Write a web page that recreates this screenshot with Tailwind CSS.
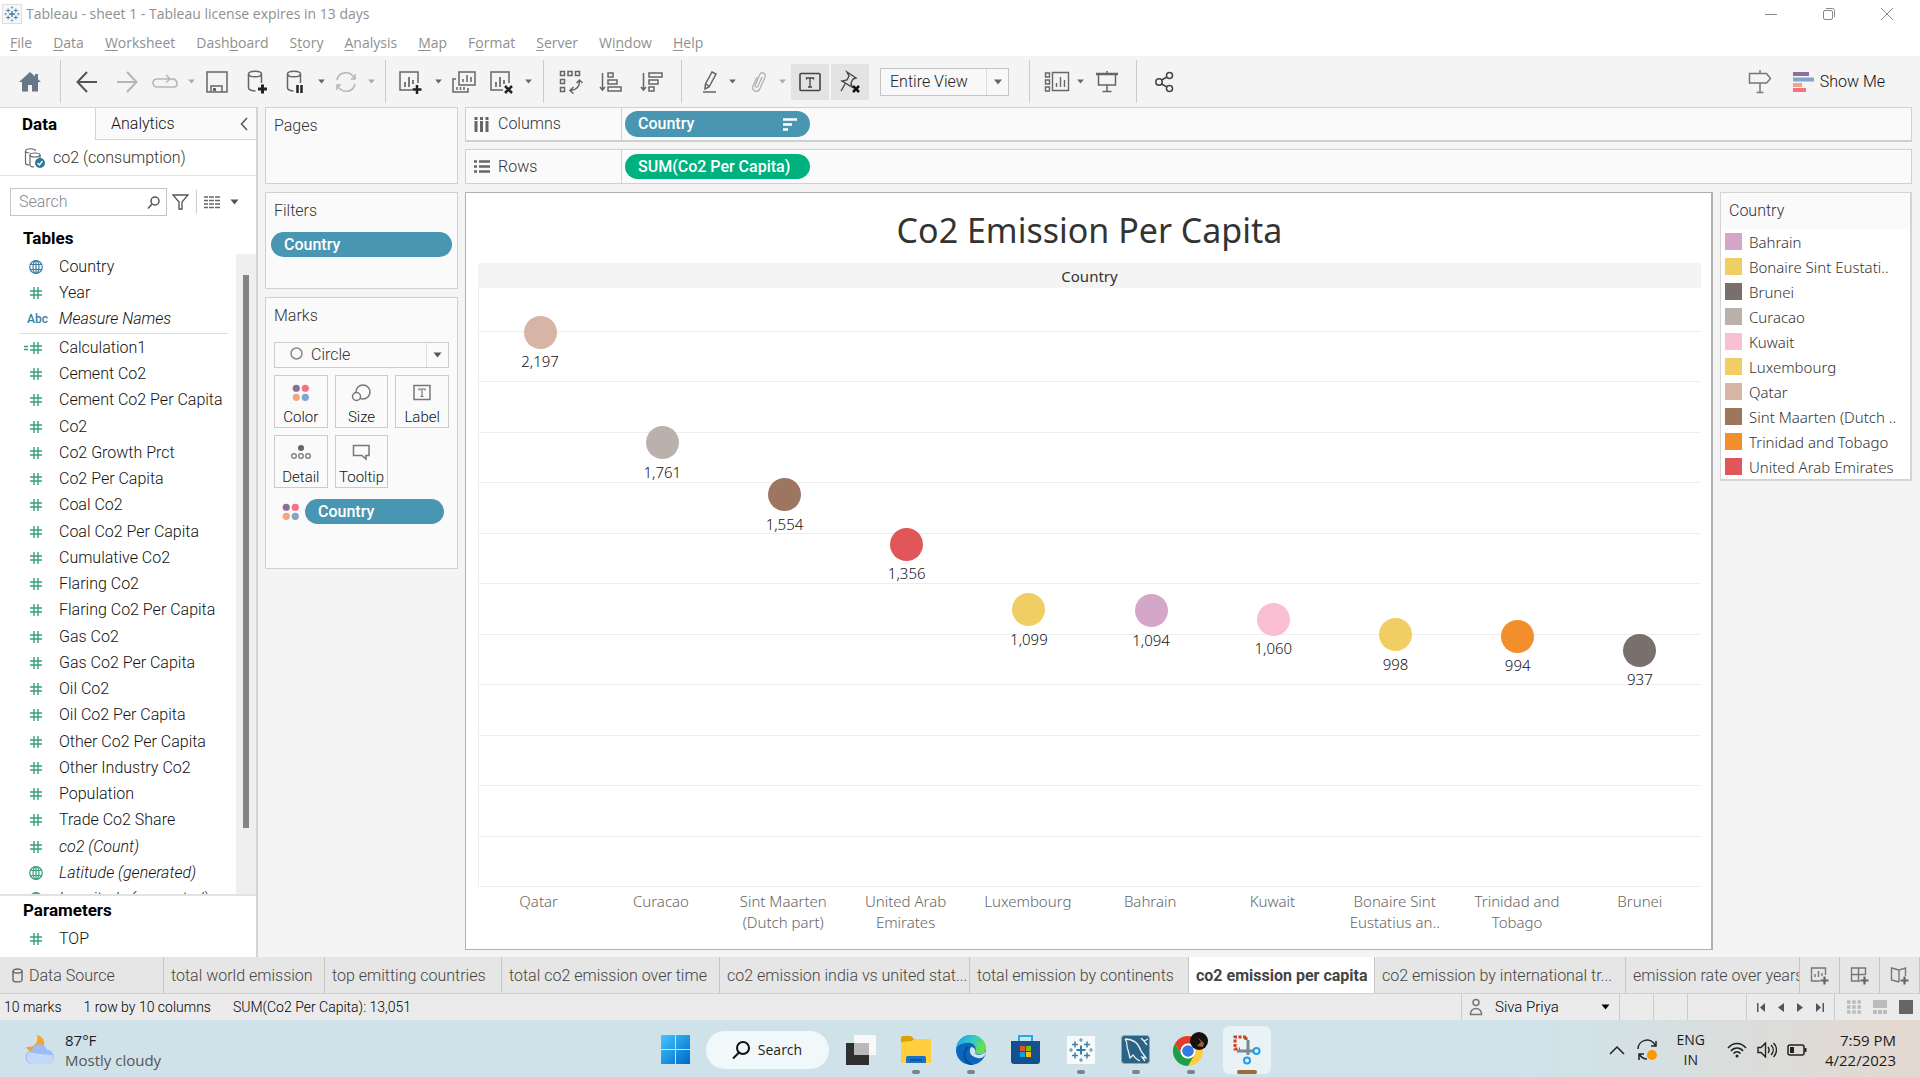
<!DOCTYPE html>
<html lang="en">
<head>
<meta charset="utf-8">
<title>Tableau - sheet 1</title>
<script src="https://cdn.jsdelivr.net/npm/@tailwindcss/browser@4"></script>
</head>
<body class="h-screen overflow-hidden bg-[#f4f4f4] font-['Roboto',sans-serif] text-[16px] leading-5 font-light text-[#222]">
<svg class="hidden" aria-hidden="true">
  <symbol id="hash" viewBox="0 0 14 14"><path d="M5 1v12M9 1v12M1 5h12M1 9h12" stroke="currentColor" stroke-width="1.4" fill="none"/></symbol>
  <symbol id="calc" viewBox="0 0 20 14"><path d="M11 1v12M15 1v12M7 5h12M7 9h12M1 5.500h4M1 8.500h4" stroke="currentColor" stroke-width="1.400" fill="none"/></symbol>
  <symbol id="globe" viewBox="0 0 14 14"><g stroke="currentColor" stroke-width="1.200" fill="none"><circle cx="7" cy="7" r="6.300"/><ellipse cx="7" cy="7" rx="3" ry="6.300"/><path d="M7 .7v12.600M1.500 4.500h11M1.500 9.500h11"/></g></symbol>
  <symbol id="caret" viewBox="0 0 8 6"><path d="M0 .5h8L4 5.500z" fill="currentColor"/></symbol>
  <symbol id="dots" viewBox="0 0 16 16"><circle cx="4" cy="4" r="3.400" fill="#8b7099"/><circle cx="12.500" cy="4" r="3.400" fill="#f8707f"/><circle cx="4" cy="12.500" r="3.400" fill="#f4a57c"/><circle cx="12.500" cy="12.500" r="3.400" fill="#84a4cb"/></symbol>
  <symbol id="tableau" viewBox="0 0 28 28"><path d="M14 9.500v9M9.500 14h9" stroke="#3a76a0" stroke-width="2"/><path d="M8 5.500v6M5 8.500h6M20 5.500v6M17 8.500h6M8 16.500v6M5 19.500h6M20 16.500v6M17 19.500h6" stroke="#3f7fa8" stroke-width="1.500"/><path d="M14 2v4M12 4h4M14 22v4M12 24h4M4 12v4M2 14h4M24 12v4M22 14h4" stroke="#5b93b5" stroke-width="1.200"/></symbol>
  <symbol id="sheet" viewBox="0 0 26 26"><g fill="none" stroke="#666" stroke-width="1.500"><path d="M15 21H3V3h18v11"/><path d="M8 18v-5M12 18V8M16 15v-4" stroke-width="1.700"/></g></symbol>
</svg>
<div class="flex h-screen flex-col">

  <!-- Title bar -->
  <header class="bg-white font-['Open_Sans',sans-serif] text-[14px] font-normal text-[#8f8f8f]">
    <div class="flex h-7 items-center">
      <svg class="ml-[2px] size-5 border border-[#ddd] bg-[#f4f6f8]"><use href="#tableau"/></svg>
      <span class="ml-1">Tableau - sheet 1 - Tableau license expires in 13 days</span>
      <div class="mr-1 ml-auto flex">
        <button aria-label="Minimize" class="flex w-[58px] justify-center"><svg width="12" height="14"><path d="M0 7.500h12" stroke="#888"/></svg></button>
        <button aria-label="Restore" class="flex w-[58px] justify-center"><svg width="14" height="14" fill="none" stroke="#888"><rect x="1.500" y="3.500" width="9" height="9" rx="1.500"/><path d="M4 1.500h6.500a2 2 0 0 1 2 2V10"/></svg></button>
        <button aria-label="Close" class="flex w-[58px] justify-center"><svg width="14" height="14" stroke="#888"><path d="M1 1l12 12M13 1L1 13"/></svg></button>
      </div>
    </div>
    <nav class="flex h-7 items-center gap-[21px] pt-[2px] pl-[10px] [&_u]:underline-offset-2">
      <a href="#"><u>F</u>ile</a><a href="#"><u>D</u>ata</a><a href="#"><u>W</u>orksheet</a><a href="#">Dash<u>b</u>oard</a><a href="#">S<u>t</u>ory</a><a href="#"><u>A</u>nalysis</a><a href="#"><u>M</u>ap</a><a href="#">F<u>o</u>rmat</a><a href="#"><u>S</u>erver</a><a href="#">Wi<u>n</u>dow</a><a href="#"><u>H</u>elp</a>
    </nav>
  </header>

  <!-- Toolbar -->
  <div role="toolbar" class="flex h-[51px] shrink-0 items-center text-[#666] [&>button]:flex [&>button]:h-9 [&>button]:shrink-0 [&>button]:items-center [&>button]:justify-center [&>hr]:h-[43px] [&>hr]:w-px [&>hr]:border-0 [&>hr]:bg-[#ccc]">
    <button aria-label="Home" class="w-[60px]"><svg width="24" height="22"><path d="M12 1L1 11h3v9.500h6V14h4v6.500h6V11h3l-3-2.800V3h-3v2.500z" fill="#697688"/></svg></button><hr>
    <button aria-label="Undo" class="ml-[6px] w-10"><svg width="22" height="22" fill="none" stroke="#555" stroke-width="2"><path d="M21 11H2M11 1L1.500 11L11 21"/></svg></button>
    <button aria-label="Redo" class="w-10"><svg width="22" height="22" fill="none" stroke="#b5b5b5" stroke-width="2"><path d="M1 11h19M11 1l9.500 10L11 21"/></svg></button>
    <button aria-label="Replay" class="w-9"><svg width="26" height="16" fill="none" stroke="#b5b5b5" stroke-width="1.500"><path d="M17 5H4.500a4 4 0 0 0-3.500 4c0 2.500 2 4 4 4H22c4 0 4-6 0-8h-5M14 1l4 4l-4 3.500"/></svg></button>
    <button aria-label="Replay options" class="w-4 text-[#aaa]"><svg width="7" height="5"><use href="#caret"/></svg></button>
    <button aria-label="Save" class="w-9"><svg width="22" height="22" fill="none" stroke="#666" stroke-width="1.500"><path d="M1 1h20v20H1zM5 21v-6h11v6"/><path d="M8.500 17v3" stroke-width="3"/></svg></button>
    <button aria-label="New data source" class="w-11"><svg width="22" height="24" fill="none" stroke="#666" stroke-width="1.500"><ellipse cx="9" cy="4" rx="6.500" ry="2.800"/><path d="M2.500 4v14c0 2 4 3 7 3M15.500 4v9"/><path d="M12 19h9M16.500 14.500v9" stroke="#222" stroke-width="3"/></svg></button>
    <button aria-label="Pause updates" class="w-[34px]"><svg width="22" height="24" fill="none" stroke="#666" stroke-width="1.500"><ellipse cx="9" cy="4" rx="6.500" ry="2.800"/><path d="M2.500 4v14c0 2 4 3 6 3M15.500 4v9"/><path d="M12.500 15v8M16.500 15v8" stroke="#222" stroke-width="2.500"/></svg></button>
    <button aria-label="Update options" class="w-4"><svg width="7" height="5"><use href="#caret"/></svg></button>
    <button aria-label="Run update" class="w-[34px]"><svg width="24" height="22" fill="none" stroke="#b5b5b5" stroke-width="1.500"><path d="M3 9a9 9 0 0 1 17-2M21 13a9 9 0 0 1-17 2M21 3v5h-4M3 19v-5h4"/></svg></button>
    <button aria-label="Run options" class="w-4 text-[#aaa]"><svg width="7" height="5"><use href="#caret"/></svg></button><hr class="ml-[6px]">
    <button aria-label="New worksheet" class="ml-1 w-10"><svg width="26" height="26"><use href="#sheet"/><path d="M15.500 20.500h9M20 16v9" stroke="#222" stroke-width="2.500"/></svg></button>
    <button aria-label="New options" class="w-4"><svg width="7" height="5"><use href="#caret"/></svg></button>
    <button aria-label="Duplicate" class="w-9"><svg width="26" height="24" fill="none" stroke="#666" stroke-width="1.500"><path d="M8 2h16v13H8zM5 9H2v13h15v-4"/><path d="M12 12V9M16 12V5M20 12V7M6 20v-3M9.500 20v-3M13 20v-3"/></svg></button>
    <button aria-label="Clear sheet" class="w-[38px]"><svg width="26" height="26"><use href="#sheet"/><path d="M17 17l7 7M24 17l-7 7" stroke="#222" stroke-width="2.500"/></svg></button>
    <button aria-label="Clear options" class="w-4"><svg width="7" height="5"><use href="#caret"/></svg></button><hr class="ml-[7px]">
    <button aria-label="Swap rows and columns" class="ml-[7px] w-10"><svg width="24" height="24" fill="none" stroke="#666" stroke-width="1.500"><path d="M1.500 1.500h4v4h-4zM9 1.500h4v4H9zM16.500 1.500h4v4h-4zM1.500 9.500h4v4h-4zM1.500 17.500h4v4h-4z"/><path d="M20.500 11c0 6-3 9-9 9.500M17.500 13l3-3l3 3M14.500 17l-3.500 3.500l3.500 3"/></svg></button>
    <button aria-label="Sort ascending" class="w-10"><svg width="24" height="22" fill="none" stroke="#666" stroke-width="1.500"><path d="M3.500 2v17M1 16l2.500 3L6 16M9 2h5v4H9zM9 9h9v4H9zM9 16h13v4H9z"/></svg></button>
    <button aria-label="Sort descending" class="ml-px w-10"><svg width="24" height="22" fill="none" stroke="#666" stroke-width="1.500"><path d="M3.500 2v17M1 16l2.500 3L6 16M9 2h13v4H9zM9 9h9v4H9zM9 16h5v4H9z"/></svg></button><hr class="ml-[9px]">
    <button aria-label="Highlight" class="ml-3 w-8"><svg width="18" height="24" fill="none" stroke="#666" stroke-width="1.500"><path d="M11 2l4 2l-7 13l-4 2l.500-5zM5 14l3 2.500M2 22h13"/></svg></button>
    <button aria-label="Highlight options" class="w-3"><svg width="7" height="5"><use href="#caret"/></svg></button>
    <button aria-label="Group" class="ml-1 w-[34px]"><svg width="18" height="24" fill="none" stroke="#b5b5b5" stroke-width="1.400"><path d="M12 7l-4 9c-1 2-3.500 1-2.500-1.500L9.500 5c1.500-4 7-2 5.500 2l-5 11.500c-2 5-9 2.500-7-2.500L7 7"/></svg></button>
    <button aria-label="Group options" class="w-3 text-[#aaa]"><svg width="7" height="5"><use href="#caret"/></svg></button>
    <button aria-label="Show mark labels" class="ml-[3px] w-[38px] bg-[#e3e3e3]"><svg width="22" height="20" fill="none" stroke="#444" stroke-width="1.600"><rect x="1" y="1.500" width="20" height="17" rx="1"/><path d="M7.500 7.500V6h7v1.500M11 6v9M9 15h4" stroke-width="1.300"/></svg></button>
    <button aria-label="Fix axes" class="ml-[2px] w-[38px] bg-[#e3e3e3]"><svg width="24" height="24" fill="none" stroke="#444" stroke-width="1.400"><path d="M9 2l9 6l-3 1l-2 4l1 4L4 11l5-1l2-4zM7 14l-4 7"/><path d="M15 16l6 6M21 16l-6 6" stroke="#111" stroke-width="2.500"/></svg></button>
    <div class="relative ml-[11px] h-[28px] w-[129px] shrink-0">
      <select aria-label="Fit" class="size-full appearance-none border border-[#c4c4c4] bg-[#f8f8f8] pl-[9px] text-[16px] text-[#222]"><option>Entire View</option></select>
      <span class="pointer-events-none absolute inset-y-px right-px flex w-[22px] items-center justify-center border-l border-[#ddd]"><svg width="8" height="6"><use href="#caret"/></svg></span>
    </div>
    <hr class="ml-5">
    <button aria-label="Show cards" class="ml-[10px] w-[34px]"><svg width="26" height="22" fill="none" stroke="#666" stroke-width="1.400"><path d="M1.500 2h4v4h-4zM1.500 9h4v4h-4zM1.500 16h4v4h-4zM8.500 1.500h16v18h-16zM12.500 16v-4M16.500 16V6M20.500 16V9"/></svg></button>
    <button aria-label="Card options" class="w-3"><svg width="7" height="5"><use href="#caret"/></svg></button>
    <button aria-label="Presentation mode" class="ml-[2px] w-[38px]"><svg width="22" height="22" fill="none" stroke="#666" stroke-width="1.500"><path d="M0 3h22" stroke-width="2.500"/><path d="M2.500 3v11h17V3M11 0v2M11 14v6M6.500 20.500h9"/></svg></button><hr class="ml-[10px]">
    <button aria-label="Share" class="ml-2 w-10"><svg width="22" height="22" fill="none" stroke="#444" stroke-width="1.500"><circle cx="5" cy="11" r="3.200"/><circle cx="15.500" cy="4.500" r="3"/><circle cx="15.500" cy="17.500" r="3"/><path d="M7.500 9l5.500-3M7.500 13l5.500 3"/></svg></button>
    <button aria-label="Data guide" class="ml-auto w-10"><svg width="24" height="24" fill="none" stroke="#777" stroke-width="1.500"><path d="M1.500 3.500h17l4 5l-4 4.500h-17zM12 0v3M12 13v9M8.500 22.500h7"/></svg></button>
    <button class="mr-[35px] ml-[13px] gap-[6px] text-[#111]"><svg width="21" height="20"><path d="M0 2h16" stroke="#8b7099" stroke-width="4"/><path d="M0 7.500h21" stroke="#84a4cb" stroke-width="4"/><path d="M0 13h9" stroke="#f4a57c" stroke-width="4"/><path d="M0 18h13" stroke="#f8707f" stroke-width="4"/></svg>Show Me</button>
  </div>

  <main class="flex min-h-0 flex-1">
    <!-- Data pane -->
    <aside class="flex w-[258px] shrink-0 flex-col border-t border-r-2 border-[#d4d4d4] bg-white text-[#111]">
      <div class="flex h-8 shrink-0">
        <button class="w-[95px] pr-7 pl-[22px] text-left text-[17px] font-bold text-black">Data</button>
        <button class="flex flex-1 items-center border-b border-l border-[#d4d4d4] bg-[#fafafa] pl-[15px]">Analytics<svg class="mr-2 ml-auto" width="8" height="14" fill="none" stroke="#555" stroke-width="1.500"><path d="M7 1L1.500 7L7 13"/></svg></button>
      </div>
      <a href="#" class="flex h-9 shrink-0 items-center border-b border-[#e4e4e4] pl-6 text-[#333]">
        <svg width="22" height="22" fill="none" stroke="#666" stroke-width="1.200"><path d="M1.500 4v12c0 1 1 2 4 2M1.500 4c0-3 10-3 10 0M1.500 4c0 1.500 2 2 4 2"/><ellipse cx="11" cy="8" rx="5" ry="2"/><path d="M6 8v10c0 1 2 2 4 2M16 8v3"/><circle cx="16" cy="16" r="5" fill="#2e7796" stroke="none"/><path d="M13.500 16l2 2l3-4" stroke="#fff" stroke-width="1.300"/></svg>
        <span class="ml-[7px]">co2 (consumption)</span></a>
      <div class="mt-3 flex h-7 shrink-0 items-center pl-[10px]">
        <label class="flex h-7 w-[157px] items-center border border-[#c4c4c4] pr-[6px] pl-2"><input aria-label="Search fields" placeholder="Search" class="min-w-0 flex-1 outline-none placeholder:text-[#888]"><svg width="13" height="13" fill="none" stroke="#555" stroke-width="1.500"><circle cx="8" cy="5" r="4"/><path d="M5 8l-4 4.500"/></svg></label>
        <button aria-label="Filter fields" class="ml-[5px]"><svg width="17" height="16" fill="none" stroke="#555" stroke-width="1.300"><path d="M1 1h15l-6 7v7H7V8z"/></svg></button>
        <span class="mx-[7px] h-6 border-l border-[#ccc]"></span>
        <button aria-label="View as list" class="flex items-center gap-[10px] text-[#555]"><svg width="16" height="13" stroke="#666" stroke-width="1.500"><path d="M0 1h4M5 1h5M11 1h5M0 4.500h4M5 4.500h5M11 4.500h5M0 8h4M5 8h5M11 8h5M0 11.500h4M5 11.500h5M11 11.500h5"/></svg><svg width="9" height="6"><use href="#caret"/></svg></button>
      </div>
      <h2 class="mt-[10px] h-7 shrink-0 pl-[23px] text-[17px] leading-6 font-bold text-black">Tables</h2>
      <div class="flex min-h-0 flex-1 overflow-hidden">
        <div class="flex-1 [&_li]:flex [&_li]:h-[26px] [&_li]:items-center [&_li]:gap-4 [&_li]:pl-[29px] [&_li]:whitespace-nowrap [&_svg]:size-[14px] [&_svg]:shrink-0 [&_svg]:text-[#35a07c]">
          <ul>
            <li><svg class="text-[#3c7f9f]!"><use href="#globe"/></svg>Country</li>
            <li><svg><use href="#hash"/></svg>Year</li>
            <li class="gap-3! pl-[27px]! italic"><span class="w-5 text-[12px] font-medium text-[#3c7f9f] not-italic">Abc</span>Measure Names</li>
          </ul>
          <hr class="mt-px mr-2 mb-px ml-[19px] border-[#ddd]">
          <ul class="[&>li:nth-child(4n+3)]:mb-px">
            <li class="gap-4! pl-[23px]!"><svg class="w-5!"><use href="#calc"/></svg>Calculation1</li>
            <li><svg><use href="#hash"/></svg>Cement Co2</li>
            <li><svg><use href="#hash"/></svg>Cement Co2 Per Capita</li>
            <li><svg><use href="#hash"/></svg>Co2</li>
            <li><svg><use href="#hash"/></svg>Co2 Growth Prct</li>
            <li><svg><use href="#hash"/></svg>Co2 Per Capita</li>
            <li><svg><use href="#hash"/></svg>Coal Co2</li>
            <li><svg><use href="#hash"/></svg>Coal Co2 Per Capita</li>
            <li><svg><use href="#hash"/></svg>Cumulative Co2</li>
            <li><svg><use href="#hash"/></svg>Flaring Co2</li>
            <li><svg><use href="#hash"/></svg>Flaring Co2 Per Capita</li>
            <li><svg><use href="#hash"/></svg>Gas Co2</li>
            <li><svg><use href="#hash"/></svg>Gas Co2 Per Capita</li>
            <li><svg><use href="#hash"/></svg>Oil Co2</li>
            <li><svg><use href="#hash"/></svg>Oil Co2 Per Capita</li>
            <li><svg><use href="#hash"/></svg>Other Co2 Per Capita</li>
            <li><svg><use href="#hash"/></svg>Other Industry Co2</li>
            <li><svg><use href="#hash"/></svg>Population</li>
            <li><svg><use href="#hash"/></svg>Trade Co2 Share</li>
            <li class="italic"><svg><use href="#hash"/></svg>co2 (Count)</li>
            <li class="italic"><svg><use href="#globe"/></svg>Latitude (generated)</li>
            <li class="italic"><svg><use href="#globe"/></svg>Longitude (generated)</li>
          </ul>
        </div>
        <div class="w-5 bg-[#efefef] pt-[21px]"><div class="mx-auto h-[553px] w-[6px] bg-[#848484]"></div></div>
      </div>
      <section class="shrink-0 border-t-2 border-[#e2e2e2]">
        <h2 class="h-[29px] pt-1 pl-[23px] text-[17px] font-bold text-black">Parameters</h2>
        <div class="flex h-8 items-start gap-4 pt-1 pl-[29px]"><svg class="mt-[3px] size-[14px] text-[#35a07c]"><use href="#hash"/></svg>TOP</div>
      </section>
    </aside>

    <!-- Cards -->
    <div class="ml-[7px] flex w-[193px] shrink-0 flex-col gap-2 text-[#333] [&>section]:border [&>section]:border-[#d0d0d0] [&>section]:bg-[#fafafa]">
      <section class="h-[77px] px-2 pt-2"><h2>Pages</h2></section>
      <section class="h-[97px] px-[5px] pt-2"><h2 class="px-[3px]">Filters</h2>
        <button class="mt-[11px] flex h-[25px] w-full items-center rounded-full bg-[#4996b2] pl-[13px] font-medium text-white">Country</button></section>
      <section class="h-[272px] px-2 pt-2"><h2>Marks</h2>
        <div class="relative mt-4 h-[26px]">
          <select aria-label="Mark type" class="size-full appearance-none border border-[#ccc] bg-[#fafafa] pl-9 text-[#333]"><option>Circle</option></select>
          <svg class="pointer-events-none absolute top-[5px] left-4" width="13" height="13" fill="none" stroke="#888" stroke-width="1.500"><circle cx="6.500" cy="6.500" r="5.500"/></svg>
          <span class="pointer-events-none absolute inset-y-px right-px flex w-[22px] items-center justify-center border-l border-[#ddd] text-[#555]"><svg width="9" height="6"><use href="#caret"/></svg></span>
        </div>
        <div class="mt-[7px] grid grid-cols-3 gap-[7px] text-[15px] text-[#111] [&>button]:flex [&>button]:h-[53px] [&>button]:flex-col [&>button]:items-center [&>button]:justify-between [&>button]:border [&>button]:border-[#ccc] [&>button]:pt-2">
          <button><svg width="17" height="17"><use href="#dots"/></svg>Color</button>
          <button><svg width="20" height="18" fill="none" stroke="#777" stroke-width="1.500"><circle cx="12" cy="8" r="7"/><circle cx="5.500" cy="12.500" r="4" fill="#fafafa"/></svg>Size</button>
          <button><svg width="18" height="17" fill="none" stroke="#777" stroke-width="1.500"><rect x="1" y="1.500" width="16" height="14"/><path d="M6 6.500V5h6v1.500M9 5v7.500M7.500 12.500h3" stroke-width="1.200"/></svg>Label</button>
          <button><svg width="20" height="16" fill="none" stroke="#777" stroke-width="1.300"><circle cx="10" cy="4" r="3" fill="#666" stroke="none"/><circle cx="3" cy="12" r="2.300"/><circle cx="10" cy="12" r="2.300"/><circle cx="17" cy="12" r="2.300"/></svg>Detail</button>
          <button><svg width="18" height="17" fill="none" stroke="#777" stroke-width="1.500"><path d="M1.500 1.500h15.500v10h-3V15l-4-3.500H1.500z"/></svg>Tooltip</button>
        </div>
        <div class="mt-[11px] mr-[5px] flex items-center pl-2"><svg width="17" height="17"><use href="#dots"/></svg><button class="ml-[6px] flex h-[25px] flex-1 items-center rounded-full bg-[#4996b2] pl-[13px] font-medium text-white">Country</button></div>
      </section>
    </div>

    <!-- Shelves and view -->
    <div class="mr-2 ml-[7px] flex min-w-0 flex-1 flex-col">
      <div class="flex h-[35px] shrink-0 border border-b-2 border-[#d0d0d0] bg-[#fafafa] text-[#333]">
        <div class="flex w-[156px] items-center border-r border-[#d0d0d0] pl-2"><svg width="15" height="15" fill="none" stroke="#666" stroke-width="3"><path d="M2 0v3M7.500 0v3M13 0v3M2 4v11M7.500 4v11M13 4v11"/></svg><span class="ml-[9px]">Columns</span></div>
        <button class="mt-[3px] ml-[3px] flex h-[26px] w-[185px] items-center rounded-full bg-[#4996b2] pr-[13px] pl-[13px] font-medium text-white">Country<svg class="ml-auto" width="15" height="13" stroke="#fff" stroke-width="2.500"><path d="M1 1.500h14M1 6.500h9M1 11.500h5"/></svg></button>
      </div>
      <div class="mt-[7px] flex h-[35px] shrink-0 border border-[#d0d0d0] bg-[#fafafa] text-[#333]">
        <div class="flex w-[156px] items-center border-r border-[#d0d0d0] pl-2"><svg width="16" height="13" stroke="#666" stroke-width="2.500"><path d="M0 1.500h3M5 1.500h11M0 6.500h3M5 6.500h11M0 11.500h3M5 11.500h11"/></svg><span class="ml-2">Rows</span></div>
        <button class="mt-[4px] ml-[3px] flex h-[25px] w-[185px] items-center rounded-full bg-[#00b180] pl-[13px] font-medium text-white">SUM(Co2 Per Capita)</button>
      </div>
      <div class="mt-2 mb-[7px] flex min-h-0 flex-1 items-start gap-[7px] font-['Noto_Sans',sans-serif]">
        <section class="flex h-full min-w-0 flex-1 flex-col border border-r-2 border-[#b0b0b0] bg-white pr-[10px] pl-3">
          <h1 class="mt-[9px] h-[61px] text-center text-[34px] leading-[56px] font-normal text-[#333]">Co2 Emission Per Capita</h1>
          <div class="h-[25px] bg-[#f4f4f4] pt-[3px] text-center text-[15px] font-normal text-[#333]">Country</div>
          <div class="relative min-h-0 flex-1 border-l border-[#eee]">
            <div class="flex h-full flex-col pt-[43px] [&>i]:flex-1 [&>i]:border-t [&>i]:border-[#eee]"><i></i><i></i><i></i><i></i><i></i><i></i><i></i><i></i><i></i><i></i><i class="border-b"></i></div>
            <div class="absolute inset-0 grid grid-cols-10 text-[15px] text-[#111] [&_b]:size-[33px] [&_b]:shrink-0 [&_b]:rounded-full [&_div]:absolute [&_div]:left-1/2 [&_div]:flex [&_div]:size-0 [&_div]:items-center [&_div]:justify-center [&_span]:absolute [&_span]:top-[19px]">
              <section class="relative"><div style="bottom:92.6%"><b class="bg-[#d7b5a6]"></b><span>2,197</span></div></section>
              <section class="relative"><div style="bottom:74.2%"><b class="bg-[#bab0ac]"></b><span>1,761</span></div></section>
              <section class="relative"><div style="bottom:65.5%"><b class="bg-[#9d7660]"></b><span>1,554</span></div></section>
              <section class="relative"><div style="bottom:57.2%"><b class="bg-[#e15759]"></b><span>1,356</span></div></section>
              <section class="relative"><div style="bottom:46.3%"><b class="bg-[#f1ce63]"></b><span>1,099</span></div></section>
              <section class="relative"><div style="bottom:46.1%"><b class="bg-[#d4a6c8]"></b><span>1,094</span></div></section>
              <section class="relative"><div style="bottom:44.7%"><b class="bg-[#fabfd2]"></b><span>1,060</span></div></section>
              <section class="relative"><div style="bottom:42.1%"><b class="bg-[#f1ce63]"></b><span>998</span></div></section>
              <section class="relative"><div style="bottom:41.9%"><b class="bg-[#f28e2b]"></b><span>994</span></div></section>
              <section class="relative"><div style="bottom:39.5%"><b class="bg-[#79706e]"></b><span>937</span></div></section>
            </div>
          </div>
          <div class="grid h-[62px] shrink-0 grid-cols-10 divide-x divide-transparent pt-1 text-center text-[15px] leading-[21px] text-[#666]">
            <span>Qatar</span><span>Curacao</span><span>Sint Maarten<br>(Dutch part)</span><span>United Arab<br>Emirates</span><span>Luxembourg</span><span>Bahrain</span><span>Kuwait</span><span>Bonaire Sint<br>Eustatius an..</span><span>Trinidad and<br>Tobago</span><span>Brunei</span>
          </div>
        </section>
        <section class="w-[192px] shrink-0 border border-r-2 border-b-2 border-[#d4d4d4] bg-white text-[15px] text-[#333]">
          <h2 class="h-9 bg-[#fafafa] pt-2 pl-2 font-['Roboto',sans-serif] text-[16px]">Country</h2>
          <ul class="[&_i]:size-[17px] [&_i]:shrink-0 [&>li]:flex [&>li]:h-[25px] [&>li]:items-center [&>li]:gap-[7px] [&>li]:pl-1 [&>li]:whitespace-nowrap">
            <li><i class="bg-[#d4a6c8]"></i>Bahrain</li>
            <li><i class="bg-[#f1ce63]"></i>Bonaire Sint Eustati..</li>
            <li><i class="bg-[#79706e]"></i>Brunei</li>
            <li><i class="bg-[#bab0ac]"></i>Curacao</li>
            <li><i class="bg-[#fabfd2]"></i>Kuwait</li>
            <li><i class="bg-[#f1ce63]"></i>Luxembourg</li>
            <li><i class="bg-[#d7b5a6]"></i>Qatar</li>
            <li><i class="bg-[#9d7660]"></i>Sint Maarten (Dutch ..</li>
            <li><i class="bg-[#f28e2b]"></i>Trinidad and Tobago</li>
            <li><i class="bg-[#e15759]"></i>United Arab Emirates</li>
          </ul>
        </section>
      </div>
    </div>
  </main>

  <!-- Sheet tabs -->
  <nav class="flex h-[37px] shrink-0 border-b border-[#d0d0d0] bg-[#e6e6e6] text-[#444] [&>button]:shrink-0 [&>button]:overflow-hidden [&>button]:border-r [&>button]:border-[#c6c6c6] [&>button]:pt-px [&>button]:pl-[7px] [&>button]:text-left [&>button]:whitespace-nowrap">
    <button class="flex w-[164px] items-center gap-[6px] pl-3!"><svg width="11" height="15" fill="none" stroke="#666" stroke-width="1.400"><ellipse cx="5.500" cy="3" rx="4.500" ry="2"/><path d="M1 3v9c0 2.500 9 2.500 9 0V3"/></svg>Data Source</button>
    <button class="w-[161px]">total world emission</button>
    <button class="w-[177px]">top emitting countries</button>
    <button class="w-[218px]">total co2 emission over time</button>
    <button class="w-[250px]">co2 emission india vs united stat...</button>
    <button class="w-[219px]">total emission by continents</button>
    <button class="w-[186px] bg-white font-bold text-[#444]">co2 emission per capita</button>
    <button class="w-[251px]">co2 emission by international tr...</button>
    <button class="min-w-0 flex-1 shrink!">emission rate over years</button>
    <button aria-label="New worksheet" class="flex w-10 items-center justify-center px-0!"><svg width="20" height="20" fill="none" stroke="#777" stroke-width="1.400"><path d="M10 15H1.500V2h14v7M5 11V8M8.500 11V5M12 10V7"/><path d="M10.500 14.500h8M14.500 10.500v8" stroke="#666" stroke-width="2.200"/></svg></button>
    <button aria-label="New dashboard" class="flex w-10 items-center justify-center px-0!"><svg width="20" height="20" fill="none" stroke="#777" stroke-width="1.400"><path d="M10 15H1.500V2h14v7M8.500 2v13M1.500 8.500h14"/><path d="M10.500 14.500h8M14.500 10.500v8" stroke="#666" stroke-width="2.200"/></svg></button>
    <button aria-label="New story" class="flex w-10 items-center justify-center px-0!"><svg width="20" height="20" fill="none" stroke="#777" stroke-width="1.400"><path d="M9 4L1.500 2v12L9 16M9 16V4l6.500-2v8"/><path d="M10.500 14.500h8M14.500 10.500v8" stroke="#666" stroke-width="2.200"/></svg></button>
  </nav>

  <!-- Status bar -->
  <div class="flex h-[26px] shrink-0 items-center bg-[#ebebeb] pl-1 text-[14px] text-black">
    <span>10 marks</span><span class="ml-[22px]">1 row by 10 columns</span><span class="ml-[22px]">SUM(Co2 Per Capita): 13,051</span>
    <button class="ml-auto flex h-full w-[159px] items-center border-x border-[#ccc] pr-[9px] pl-[7px] text-[15px] text-black"><svg width="14" height="18" fill="none" stroke="#777" stroke-width="1.500"><circle cx="7" cy="4.500" r="3"/><path d="M1.500 16.500c-.500-8 11.500-8 11 0z"/></svg><span class="ml-3">Siva Priya</span><svg class="ml-auto" width="9" height="6"><use href="#caret"/></svg></button>
    <span class="h-full w-[34px] border-r border-[#ccc]"></span><span class="h-full w-[34px] border-r border-[#ccc]"></span><span class="h-full w-[59px] border-r border-[#ccc]"></span>
    <div class="flex h-full w-[88px] items-center justify-center gap-[13px] border-r border-[#ccc]">
      <button aria-label="First"><svg width="8" height="9" fill="#555"><path d="M0 0h1.500v9H0zM8 0v9L3 4.500z"/></svg></button><button aria-label="Previous"><svg width="6" height="9" fill="#555"><path d="M6 0v9L0 4.500z"/></svg></button><button aria-label="Next"><svg width="6" height="9" fill="#555"><path d="M0 0v9l6-4.500z"/></svg></button><button aria-label="Last"><svg width="8" height="9" fill="#555"><path d="M6.500 0H8v9H6.500zM0 0v9l5-4.500z"/></svg></button>
    </div>
    <div class="flex w-[85px] items-center gap-3 pl-3">
      <button aria-label="Sheet sorter"><svg width="14" height="14" stroke="#bbb" stroke-width="3.500" stroke-dasharray="3.500 1.700"><path d="M0 2h14M0 7h14M0 12h14"/></svg></button><button aria-label="Filmstrip"><svg width="14" height="14" fill="#bbb"><path d="M0 0h14v8H0zM0 10h4v4H0zM5 10h4v4H5zM10 10h4v4h-4z"/></svg></button><button aria-label="Tabs" class="size-[14px] bg-[#666]"></button>
    </div>
  </div>

  <!-- Windows taskbar -->
  <footer class="grid h-[57px] shrink-0 grid-cols-[1fr_auto_1fr] items-center bg-linear-to-r from-[#cfe1e9] via-[#cfe3ea] via-80% to-[#e4d8cf] pt-[2px] font-['Open_Sans',sans-serif] text-[14px] font-normal text-[#1c1c1c]">
    <button class="flex items-center pl-6 text-left text-[15px]"><svg width="34" height="34"><path d="M13 2c9 2 10 13 1 16C8 20 3 17 2 14c8 1 13-5 11-12z" fill="#f5a623"/><path d="M9 31a7 7 0 0 1-1-14c2-8 13-8 15 0c8-1 10 14 1 14z" fill="#9dbdf2"/><path d="M9 31a7 7 0 0 1-4-12c6 2 15 2 23 3c3 3 1 9-4 9z" fill="#c3d8fa"/></svg><span class="ml-[7px]">87°F<br><span class="text-[#555]">Mostly cloudy</span></span></button>
    <div class="flex items-center [&_i]:absolute [&_i]:bottom-0 [&_i]:h-1 [&_i]:w-2 [&_i]:rounded-full [&_i]:bg-[#7b8589] [&>button]:relative [&>button]:flex [&>button]:h-12 [&>button]:w-[55px] [&>button]:items-center [&>button]:justify-center">
      <button aria-label="Start" class="w-[60px]!"><svg width="29" height="29"><defs><linearGradient id="win" x1="0" y1="0" x2="1" y2="1"><stop stop-color="#42c6ff"/><stop offset="1" stop-color="#0067c5"/></linearGradient></defs><path d="M0 0h14v14H0zM15 0h14v14H15zM0 15h14v14H0zM15 15h14v14H15z" fill="url(#win)"/></svg></button>
      <button class="h-[38px]! w-[123px]! gap-2 rounded-full bg-[#f0f8fa]"><svg width="18" height="18" fill="none" stroke="#111" stroke-width="2"><circle cx="11" cy="7" r="6"/><path d="M7 11.500L1 17.500"/></svg>Search</button>
      <button aria-label="Task view" class="ml-[5px]"><svg width="30" height="30"><path d="M0 8h23v22H0z" fill="#2f2f2f"/><path d="M8 0h22v20H8z" fill="#f8f8f8"/><path d="M8 8h15v12H8z" fill="#b9b9b9"/></svg></button>
      <button aria-label="File Explorer"><svg width="30" height="28"><path d="M0 2q0-2 2-2h8l3 3v6H0z" fill="#dca000"/><path d="M0 6l11-1l2-2h15q2 0 2 2v22H0z" fill="#ffcf3e"/><path d="M5 27v-5q0-2 2-2h16q2 0 2 2v5z" fill="#1572c4"/><path d="M9 24h12" stroke="#0c4b92" stroke-width="1.500"/></svg><i></i></button>
      <button aria-label="Edge"><svg width="30" height="30"><defs><linearGradient id="edge" x1="0" y1="0" x2="1" y2=".4"><stop stop-color="#1b9de2"/><stop offset=".5" stop-color="#31c5d2"/><stop offset="1" stop-color="#66e052"/></linearGradient></defs><circle cx="15" cy="15" r="15" fill="#0d66bd"/><path d="M0 14C1 5 8 0 15 0c9 0 15 6 15 13c0 6-7 8-11 5c3-6-2-11-8-10C6 8 2 10 0 14z" fill="url(#edge)"/><path d="M19 18c4 3 10 1 11-3c0 4-3 7-6 7c-9 0-12-5-9-10c-9 3-6 15 3 18C8 31 4 20 11 11" fill="#0b4d95"/><path d="M15 12c4 0 5 4 4 6c2 3 8 2 11-2c0 5-4 8-8 7c-7-1-10-6-7-11z" fill="#cfe3ea"/></svg><i></i></button>
      <button aria-label="Microsoft Store"><svg width="30" height="30"><path d="M8 6V1h13v5" fill="none" stroke="#25a9ec" stroke-width="2"/><path d="M0 6h29v20q0 3-3 3H3q-3 0-3-3z" fill="#144f8e"/><path d="M9 11h5v5H9z" fill="#f05123"/><path d="M15 11h5v5h-5z" fill="#80bb00"/><path d="M9 17h5v5H9z" fill="#00a3ee"/><path d="M15 17h5v5h-5z" fill="#ffb800"/></svg></button>
      <button aria-label="Tableau"><svg class="bg-[#f7f9fa]" width="28" height="28"><use href="#tableau"/></svg><i></i></button>
      <button aria-label="MySQL Workbench"><svg width="30" height="30"><rect x=".5" y=".5" width="28" height="28" rx="3" fill="#2c6385" stroke="#8aa8b9"/><path d="M4 4c9 0 14 6 16 12l5 7l-4-1l3 4M4 4c3 3 1 7 3 11l2 8l3-3c2 3 4 5 7 6M20 3l3 3l3 4M23 6l4-2" fill="none" stroke="#e4eff4" stroke-width="1.300"/></svg><i></i></button>
      <button aria-label="Chrome"><svg width="36" height="36"><circle cx="15" cy="19" r="15" fill="#ffcd40"/><path d="M2 11.500A15 15 0 0 1 28 11.500H15a7.500 7.500 0 0 0-6.500 11z" fill="#e33b2e"/><path d="M2 11.500A15 15 0 0 0 15 34l6.500-11.300a7.500 7.500 0 0 1-13 0z" fill="#1a9f4b"/><circle cx="15" cy="19" r="7.500" fill="#fff"/><circle cx="15" cy="19" r="5.800" fill="#3478e8"/><circle cx="26" cy="9" r="9" fill="#16110e"/><path d="M24 5l4 5l-4 4l6 1l1-4z" fill="#9a5d47"/></svg><i></i></button>
      <button aria-label="Snipping Tool" class="mx-1 w-12! rounded-md bg-[#e9f2f5]"><svg width="28" height="30" fill="none"><path d="M13 2H2v12h5M13 2v4" stroke="#d43f16" stroke-width="3" stroke-dasharray="3 1.500"/><path d="M15 5v15M4 16h16" stroke="#7d8790" stroke-width="3"/><circle cx="23.500" cy="16" r="3" stroke="#219fe0" stroke-width="2"/><circle cx="14" cy="25.500" r="3" stroke="#219fe0" stroke-width="2"/></svg><i class="w-5! bg-[#9c6a3b]!"></i></button>
    </div>
    <div class="flex items-center justify-end pr-6">
      <button aria-label="Hidden icons"><svg width="16" height="10" fill="none" stroke="#222" stroke-width="1.500"><path d="M1 9l7-7l7 7"/></svg></button>
      <button aria-label="Updates" class="ml-3"><svg width="21" height="22" fill="none" stroke="#222" stroke-width="1.500"><path d="M1 10a9 9 0 0 1 17-4M19 2v5h-5M2 21v-6h5M2 15c2 3 5 5 8 5"/><circle cx="15" cy="16" r="5" fill="#ff9800" stroke="none"/></svg></button>
      <button class="ml-[18px] text-center">ENG<br>IN</button>
      <button aria-label="Network, volume and battery" class="ml-[22px] flex items-center gap-[10px]"><svg width="20" height="16" fill="none" stroke="#222" stroke-width="1.500"><path d="M1 6c5-6 13-6 18 0M4 9c3-4 9-4 12 0M6.500 11.500c2-2.500 5-2.500 7 0"/><circle cx="10" cy="14" r="1.500" fill="#222" stroke="none"/></svg><svg width="20" height="16" fill="none" stroke="#222" stroke-width="1.400"><path d="M1 5.500h3L8.500 1v14L4 10.500H1zM11 5c1.500 2 1.500 4 0 6M14 3c3 3 3 7 0 10M16.500 1c4 4 4 10 0 14"/></svg><svg width="20" height="12" fill="none" stroke="#222" stroke-width="1.500"><rect x="1" y="1" width="16" height="10" rx="2"/><path d="M3 3h4v6H3z" fill="#222" stroke="none"/><path d="M18.500 4v4" stroke-width="2"/></svg></button>
      <button class="ml-[18px] text-right text-[15px]">7:59 PM<br>4/22/2023</button>
    </div>
  </footer>
</div>
</body>
</html>
